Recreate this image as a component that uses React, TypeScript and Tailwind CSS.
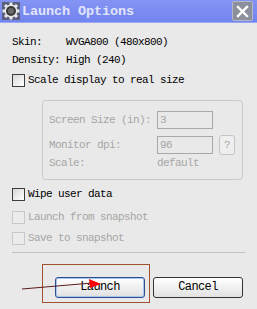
import React from "react";

const mono = { fontFamily: '"Liberation Mono", "DejaVu Sans Mono", monospace' };

function Check({ disabled = false }: { disabled?: boolean }) {
  return (
    <span
      className={
        disabled
          ? "inline-block w-[13px] h-[13px] border border-[#c9c9c9] bg-[#ececec]"
          : "inline-block w-[13px] h-[13px] border border-[#3c3c3c] bg-gradient-to-br from-[#d8d8d8] to-[#ffffff]"
      }
    />
  );
}

function CheckRow({ label, disabled = false }: { label: string; disabled?: boolean }) {
  return (
    <div className="flex items-center h-[13px]">
      <Check disabled={disabled} />
      <span className={"ml-[3px] " + (disabled ? "text-[#a6a6a6]" : "text-black")}>{label}</span>
    </div>
  );
}

function Gear() {
  return (
    <svg width="18" height="18" viewBox="0 0 18 18">
      <rect x="0" y="0" width="18" height="18" fill="#5a5f80" />
      <g fill="#e8e8e8">
        <circle cx="9" cy="9" r="6.5" />
        <rect x="7.5" y="0.5" width="3" height="17" />
        <rect x="0.5" y="7.5" width="17" height="3" />
        <rect x="7.5" y="0.5" width="3" height="17" transform="rotate(45 9 9)" />
        <rect x="7.5" y="0.5" width="3" height="17" transform="rotate(-45 9 9)" />
      </g>
      <circle cx="9" cy="9" r="5" fill="#3a3a3a" />
      <circle cx="9" cy="9" r="3" fill="#6a6a6a" />
    </svg>
  );
}

export default function App() {
  return (
    <div className="w-[257px] h-[309px] bg-[#e9e9e9] flex flex-col overflow-hidden text-[11px] leading-[13px] tracking-[-0.6px]" style={mono}>
      <div className="h-[23px] bg-gradient-to-b from-[#8494f4] to-[#7284ee] flex items-center pl-[2px] pr-[4px] border-b border-[#9aa6f0]">
        <Gear />
        <span className="ml-[2px] text-[13.5px] font-bold tracking-[-0.1px] text-[#e2e5fb]">Launch Options</span>
        <div className="ml-auto w-[21px] h-[20px] bg-[#8c8f9c] border border-[#b6b8c6] rounded-[2px] flex items-center justify-center">
          <svg width="13" height="13" viewBox="0 0 13 13">
            <path d="M2 2 L11 11 M11 2 L2 11" stroke="#ffffff" strokeWidth="2.4" strokeLinecap="square" />
          </svg>
        </div>
      </div>

      <div className="flex flex-col px-[12px] pt-[13px]">
        <div className="whitespace-pre h-[13px]">{"Skin:    WVGA800 (480x800)"}</div>
        <div className="whitespace-pre h-[13px] mt-[5px]">{"Density: High (240)"}</div>
        <div className="mt-[7px]">
          <CheckRow label="Scale display to real size" />
        </div>

        <div className="ml-[30px] mr-[2px] mt-[13px] h-[80px] border border-[#cacaca] rounded-[4px] pl-[6px] pt-[10px] text-[#a6a6a6] flex flex-col">
          <div className="flex items-center h-[18px]">
            <span className="whitespace-pre w-[108px]">Screen Size (in):</span>
            <div className="w-[56px] h-[18px] border border-[#a8a8a8] pl-[2px] leading-[16px]">3</div>
          </div>
          <div className="flex items-center h-[20px] mt-[6px]">
            <span className="whitespace-pre w-[108px]">Monitor dpi:</span>
            <div className="w-[56px] h-[18px] border border-[#a8a8a8] pl-[2px] leading-[16px]">96</div>
            <div className="ml-[6px] w-[16px] h-[20px] border border-[#c4c4c4] rounded-[3px] bg-[#efefef] flex items-center justify-center">?</div>
          </div>
          <div className="flex items-center h-[13px] mt-[2px]">
            <span className="whitespace-pre w-[108px]">Scale:</span>
            <span>default</span>
          </div>
        </div>

        <div className="mt-[8px]">
          <CheckRow label="Wipe user data" />
        </div>
        <div className="mt-[10px]">
          <CheckRow label="Launch from snapshot" disabled />
        </div>
        <div className="mt-[8px]">
          <CheckRow label="Save to snapshot" disabled />
        </div>
        <div className="mt-[7px] h-px bg-[#c2c2c2]" />

        <div className="relative flex mt-[11px]">
          <div className="ml-[30px] w-[108px] h-[39px] border border-[#a0522d] flex items-start pt-[12px] pl-[12px]">
            <div className="w-[90px] h-[21px] rounded-[3px] border border-[#2f4f8c] bg-gradient-to-b from-[#ffffff] to-[#e0e0e0] flex items-center justify-center text-[12px] text-black shadow-[inset_0_0_0_1px_#a8c4f0]">
              Launch
            </div>
          </div>
          <div className="ml-[3px] mt-[13px] w-[90px] h-[21px] rounded-[3px] border border-[#333333] bg-gradient-to-b from-[#ffffff] to-[#e2e2e2] flex items-center justify-center text-[12px] text-black">
            Cancel
          </div>
          <svg className="absolute left-0 top-0" width="100" height="40" viewBox="0 0 100 40">
            <line x1="10" y1="25" x2="80" y2="19" stroke="#5a1a1a" strokeWidth="1" />
            <polygon points="77,15 89,20 78,24" fill="#ff0000" />
          </svg>
        </div>
      </div>
    </div>
  );
}
